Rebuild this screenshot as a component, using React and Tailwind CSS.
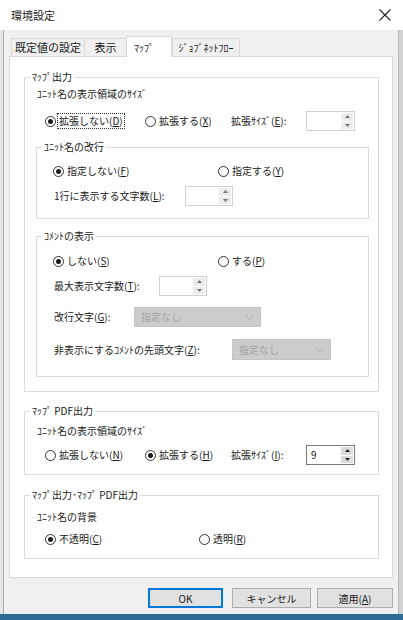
import React from "react";

const Acc = ({ k }) => (
  <>
    (<span className="underline">{k}</span>)
  </>
);

function Radio({ checked, children, focus, className = "" }) {
  return (
    <div className={`flex items-center ${className}`}>
      <span className="w-[11px] h-[11px] shrink-0 rounded-full border border-[#333333] bg-white flex items-center justify-center">
        {checked && <span className="w-[5px] h-[5px] rounded-full bg-[#1a1a1a]" />}
      </span>
      <span
        className={`ml-[2px] px-[1px] leading-[14px] ${
          focus ? "outline outline-1 outline-dotted outline-[#333333]" : ""
        }`}
      >
        {children}
      </span>
    </div>
  );
}

function Spin({ value = "", dark = false, w = "w-[48px]" }) {
  return (
    <div
      className={`flex h-[20px] ${w} border bg-white ${
        dark ? "border-[#7a7a7a]" : "border-[#d0d0d0]"
      }`}
    >
      <div className="flex-1 pl-[4px] text-[10px] leading-[18px]">{value}</div>
      <div className="w-[14px] flex flex-col gap-[1px] p-[1px]">
        <div
          className={`flex-1 flex items-center justify-center ${
            dark ? "bg-[#dcdcdc]" : "bg-[#ececec]"
          }`}
        >
          <svg width="5" height="3" viewBox="0 0 5 3">
            <path d="M2.5 0 L5 3 L0 3 Z" fill={dark ? "#222" : "#777"} />
          </svg>
        </div>
        <div
          className={`flex-1 flex items-center justify-center ${
            dark ? "bg-[#dcdcdc]" : "bg-[#ececec]"
          }`}
        >
          <svg width="5" height="3" viewBox="0 0 5 3">
            <path d="M0 0 L5 0 L2.5 3 Z" fill={dark ? "#222" : "#777"} />
          </svg>
        </div>
      </div>
    </div>
  );
}

function Combo({ w, h = "h-[20px]" }) {
  return (
    <div
      className={`flex items-center ${w} ${h} border border-[#c4c4c4] bg-[#cccccc] text-[#a2a2a2] pl-[6px] pr-[6px]`}
    >
      <span className="flex-1 leading-[14px]">指定なし</span>
      <svg width="9" height="5" viewBox="0 0 9 5">
        <path d="M0.5 0.5 L4.5 4.5 L8.5 0.5" fill="none" stroke="#adadad" strokeWidth="1" />
      </svg>
    </div>
  );
}

function Group({ title, className = "", children }) {
  return (
    <fieldset className={`border border-[#dcdcdc] min-w-0 ${className}`}>
      <legend className="ml-[5px] px-[2px] text-[10px] leading-[12px]">{title}</legend>
      {children}
    </fieldset>
  );
}

function Tab({ children, selected, w }) {
  if (selected) {
    return (
      <div
        className={`${w} h-[21px] -mb-[1px] bg-white border border-b-0 border-[#d9d9d9] relative z-10 flex items-center pl-[7px] text-[10px]`}
      >
        {children}
      </div>
    );
  }
  return (
    <div
      className={`${w} h-[18px] bg-[#f0f0f0] border border-b-0 border-[#d9d9d9] -mr-[1px] flex items-center justify-center text-[11px]`}
    >
      {children}
    </div>
  );
}

function Button({ children, w, primary, className = "" }) {
  return (
    <div
      className={`${w} h-[20px] flex items-center justify-center text-[10px] bg-[#e1e1e1] ${
        primary ? "border-2 border-[#0078d7]" : "border border-[#adadad]"
      } ${className}`}
    >
      {children}
    </div>
  );
}

export default function App() {
  return (
    <div className="w-[403px] h-[620px] bg-[#2e6a93] flex flex-col text-[#1a1a1a] text-[10px] font-['Noto_Sans_CJK_JP','Noto_Sans',sans-serif] overflow-hidden">
      {/* Title bar */}
      <div className="h-[30px] bg-white flex items-center pl-[11px] pr-[12px] shrink-0">
        <span className="flex-1 text-[11px] leading-[14px]">環境設定</span>
        <svg width="12" height="12" viewBox="0 0 12 12">
          <path d="M0.5 0.5 L11.5 11.5 M11.5 0.5 L0.5 11.5" stroke="#222" strokeWidth="1.1" />
        </svg>
      </div>

      {/* Body */}
      <div className="flex h-[584px] shrink-0">
        <div className="w-[3px] bg-[#e6e6e6]" />
        <div className="flex-1 bg-[#f0f0f0] border-l border-[#a8a8a8] pl-[5px] pr-[5px] pt-[6px] flex flex-col">
          {/* Tabs */}
          <div className="flex items-end h-[20px] pl-[2px]">
            <Tab w="w-[74px]">既定値の設定</Tab>
            <Tab w="w-[43px]">表示</Tab>
            <Tab w="w-[46px]" selected>
              ﾏｯﾌﾟ
            </Tab>
            <Tab w="w-[68px]">
              <span className="text-[10px]">ｼﾞｮﾌﾞﾈｯﾄﾌﾛｰ</span>
            </Tab>
          </div>

          {/* Panel */}
          <div className="h-[522px] bg-white border border-[#d9d9d9] pt-[14px] pl-[14px] pr-[13px] flex flex-col">
            {/* マップ出力 */}
            <Group title="ﾏｯﾌﾟ出力" className="pb-[14px]">
              <div className="mt-[4px] pl-[12px] leading-[14px]">ﾕﾆｯﾄ名の表示領域のｻｲｽﾞ</div>
              <div className="mt-[10px] h-[20px] pl-[20px] flex items-center">
                <Radio checked focus className="w-[100px]">
                  拡張しない<Acc k="D" />
                </Radio>
                <Radio className="w-[86px]">
                  拡張する<Acc k="X" />
                </Radio>
                <span className="w-[75px] leading-[14px]">
                  拡張ｻｲｽﾞ(<span className="underline">E</span>):
                </span>
                <Spin w="w-[49px]" />
              </div>

              <Group title="ﾕﾆｯﾄ名の改行" className="mt-[10px] ml-[11px] mr-[9px] pb-[12px]">
                <div className="mt-[8px] h-[20px] pl-[16px] flex items-center">
                  <Radio checked className="w-[165px]">
                    指定しない<Acc k="F" />
                  </Radio>
                  <Radio>
                    指定する<Acc k="Y" />
                  </Radio>
                </div>
                <div className="mt-[5px] h-[20px] pl-[17px] flex items-center">
                  <span className="w-[131px] leading-[14px]">
                    1行に表示する文字数(<span className="underline">L</span>):
                  </span>
                  <Spin />
                </div>
              </Group>

              <Group title="ｺﾒﾝﾄの表示" className="mt-[11px] ml-[11px] mr-[9px] pb-[16px]">
                <div className="mt-[9px] h-[20px] pl-[16px] flex items-center">
                  <Radio checked className="w-[165px]">
                    しない<Acc k="S" />
                  </Radio>
                  <Radio>
                    する<Acc k="P" />
                  </Radio>
                </div>
                <div className="mt-[5px] h-[20px] pl-[17px] flex items-center">
                  <span className="w-[105px] leading-[14px]">
                    最大表示文字数(<span className="underline">T</span>):
                  </span>
                  <Spin />
                </div>
                <div className="mt-[11px] h-[20px] pl-[17px] flex items-center">
                  <span className="w-[80px] leading-[14px]">
                    改行文字(<span className="underline">G</span>):
                  </span>
                  <Combo w="w-[127px]" />
                </div>
                <div className="mt-[12px] h-[21px] pl-[17px] flex items-center">
                  <span className="w-[178px] leading-[14px]">
                    非表示にするｺﾒﾝﾄの先頭文字(<span className="underline">Z</span>):
                  </span>
                  <Combo w="w-[99px]" h="h-[21px]" />
                </div>
              </Group>
            </Group>

            {/* マップPDF出力 */}
            <Group title="ﾏｯﾌﾟ PDF出力" className="mt-[13px] pb-[9px]">
              <div className="mt-[7px] pl-[12px] leading-[14px]">ﾕﾆｯﾄ名の表示領域のｻｲｽﾞ</div>
              <div className="mt-[7px] h-[20px] pl-[20px] flex items-center">
                <Radio className="w-[100px]">
                  拡張しない<Acc k="N" />
                </Radio>
                <Radio checked className="w-[86px]">
                  拡張する<Acc k="H" />
                </Radio>
                <span className="w-[75px] leading-[14px]">
                  拡張ｻｲｽﾞ(<span className="underline">I</span>):
                </span>
                <Spin w="w-[49px]" value="9" dark />
              </div>
            </Group>

            {/* マップ出力・マップPDF出力 */}
            <Group title="ﾏｯﾌﾟ出力･ﾏｯﾌﾟ PDF出力" className="mt-[14px] pb-[9px]">
              <div className="mt-[9px] pl-[12px] leading-[14px]">ﾕﾆｯﾄ名の背景</div>
              <div className="mt-[5px] h-[20px] pl-[20px] flex items-center">
                <Radio checked className="w-[154px]">
                  不透明<Acc k="C" />
                </Radio>
                <Radio>
                  透明<Acc k="R" />
                </Radio>
              </div>
            </Group>
          </div>

          {/* Buttons */}
          <div className="mt-[10px] flex justify-end">
            <Button w="w-[75px]" primary>
              OK
            </Button>
            <Button w="w-[79px]" className="ml-[9px]">
              キャンセル
            </Button>
            <Button w="w-[76px]" className="ml-[6px]">
              適用<Acc k="A" />
            </Button>
          </div>
        </div>
        <div className="w-[5px] bg-[#d2d2d2] border-l border-[#b8b8b8]" />
      </div>
    </div>
  );
}
